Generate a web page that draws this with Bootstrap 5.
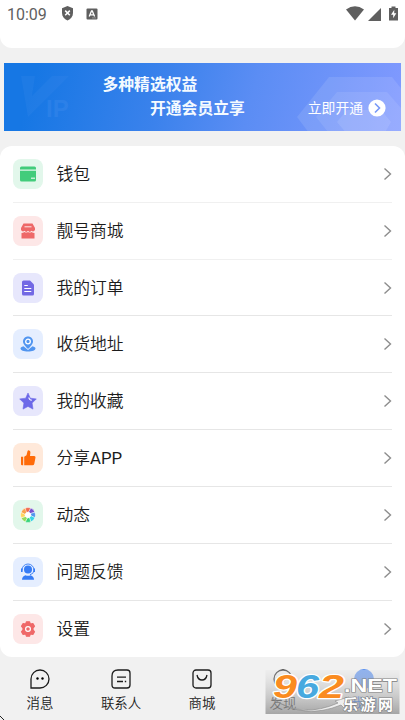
<!DOCTYPE html>
<html lang="zh-CN">
<head>
<meta charset="utf-8">
<meta name="viewport" content="width=device-width, initial-scale=1">
<title>我的</title>
<link href="https://cdn.jsdelivr.net/npm/bootstrap@5.3.0/dist/css/bootstrap.min.css" rel="stylesheet">
<style>
body{width:405px;height:720px;overflow:hidden;background:#f1f1f1;color:#1c1c1c;font-family:Roboto,"Noto Sans CJK SC",sans-serif}
svg{display:block;flex:none}
.top-panel{height:48px;border-radius:0 0 12px 12px}
.status-row{height:27px;color:#5f5f5f;padding:0 7px}
.clock{font-size:16px;line-height:27px;width:54px;padding-top:1px}
.alert-mark{margin-left:12px}
.battery{margin-left:8px}
.vip-banner{height:68px;margin:15px 4px;background:linear-gradient(105deg,#1677e4 8%,#3b82ec 40%,#5b8df4 62%,#829aff 100%)}
.vip-copy{padding:10px 0 0 98.5px;font-size:15.8px;line-height:24px;font-weight:700;color:#f4faff}
.vip-copy .second-line{padding-left:47.5px}
.vip-open{right:15px;bottom:13px;font-size:13.8px;line-height:20px;color:#fff;gap:5px}
.menu-panel{border-radius:12px;padding:0 13px;height:511px}
.menu-row{height:57px;border-bottom:1px solid #e6e6e6;font-size:16.8px;line-height:24px}
.menu-row.short{height:56px}
.menu-row:last-child{border-bottom:0}
.menu-row:first-child,.menu-row:nth-child(2){border-color:#f0f0f0}
.menu-text{font-weight:350}
.tile{width:30px;height:30px;border-radius:8px;margin-right:13.5px;flex:none}
.tile svg{width:18px;height:18px}
.g{background:#e2f7eb}.r{background:#fde7e7}.p{background:#e7e7fc}.b{background:#e5eeff}.o{background:#ffe9da}
.tabs{height:63px;font-size:13.4px;line-height:18px;font-weight:350}
.tab-item{width:81px;padding-top:12px;padding-right:1px;gap:6px}
.watermark{left:265px;top:670px}
.screen-corner{left:0;bottom:0}
</style>
</head>
<body>
<header class="top-panel bg-white">
  <div class="status-row d-flex align-items-center">
    <span class="clock">10:09</span>
    <svg width="13" height="15" viewBox="0 0 13 15"><path d="M6.5 0 12 2.2V7c0 3.4-2.2 6-5.5 7.5C3.200 13 1 10.400 1 7V2.200z" fill="currentColor"/><path d="m4.200 4.600 4.600 4.600m0-4.600L4.200 9.200" stroke="#fff" stroke-width="1.500"/></svg>
    <svg class="alert-mark" width="12" height="12" viewBox="0 0 12 12"><rect x=".5" y=".5" width="11" height="11" rx="1" fill="currentColor"/><path d="M3.200 8.500 5.500 3h.8l2.300 5.500M4.200 6.800h3.500" fill="none" stroke="#fff" stroke-width="1.300"/><path d="M6.500 9.900h1m1 0h1" stroke="#ccc"/></svg>
    <div class="d-flex align-items-center ms-auto">
      <svg width="18" height="15" viewBox="0 0 18 15"><path d="M0 3.500Q9-3 18 3.500L9 14.500z" fill="currentColor"/></svg>
      <svg width="13" height="14" viewBox="0 0 13 14" class="ms-1"><path d="M0 14 13 1v13z" fill="currentColor"/></svg>
      <svg class="battery" width="9" height="15" viewBox="0 0 9 15"><path d="M0 2h2.500V.5h4V2H9v12.500H0z" fill="currentColor"/><path d="M5.300 3.800 2 8.700h2.200v3.500L7.300 7.300H5.200z" fill="#fff"/></svg>
    </div>
  </div>
</header>

<section class="vip-banner position-relative overflow-hidden">
  <svg class="position-absolute top-0 start-0" width="397" height="68" viewBox="0 0 397 68">
    <path d="M17 13h14l-3 20 20-20h17L24 54z" fill="#438bed" opacity=".2"/>
    <text x="42" y="54" font-family="Liberation Sans" font-weight="700" font-size="24" fill="#4790ef" opacity=".3">IP</text>
    <path d="M293 54 325 14h63l32 40-12 20H308z" fill="#fff" opacity=".1"/>
    <path d="M312 54 333 29h50l22 25-12 20H328z" fill="#fff" opacity=".09"/>
    <path d="m333 59 10-12h34l10 12-7 12h-37z" fill="#fff" opacity=".1"/>
  </svg>
  <div class="vip-copy position-relative"><div>多种精选权益</div><div class="second-line">开通会员立享</div></div>
  <div class="vip-open position-absolute d-flex align-items-center"><span>立即开通</span>
    <svg width="18" height="18" viewBox="0 0 18 18"><circle cx="9" cy="9" r="8.600" fill="#fff"/><path d="m7 4.500 4.500 4.500L7 13.500" fill="none" stroke="#7798f7" stroke-width="1.600"/></svg>
  </div>
</section>

<main class="menu-panel bg-white">
  <div class="menu-row d-flex align-items-center"><span class="tile g d-flex align-items-center justify-content-center"><svg viewBox="0 0 18 18" fill="#42cc7b"><path d="M1 4.500V3q0-1.500 1.500-1.500h13Q17 1.500 17 3v1.500zM1 5.700h16V15q0 1.500-1.500 1.500h-13Q1 16.500 1 15z"/><path d="M12 13.200h4" stroke="#e2f7eb" stroke-width="1.200"/></svg></span><span class="menu-text">钱包</span><svg class="ms-auto" width="9" height="14" viewBox="0 0 9 14"><path d="m1.500 1.500 6 5.500-6 5.500" fill="none" stroke="#8d8d8d" stroke-width="1.400"/></svg></div>
  <div class="menu-row d-flex align-items-center"><span class="tile r d-flex align-items-center justify-content-center"><svg viewBox="0 0 18 18" fill="#ee6868"><path d="M4.500 1.500h9l2.500 4.500v2q-1.500 2.500-3.500.8Q10.800 11 9 8.800 7.200 11 5.500 8.800 3.500 10.500 2 8V6zM2.500 11q1.500 0 3-1 1.700 1.200 3.500 0 1.800 1.200 3.500 0 1.500 1 3 1v5.500h-13z"/><path d="M5.500 4.800h7" stroke="#fde7e7"/></svg></span><span class="menu-text">靓号商城</span><svg class="ms-auto" width="9" height="14" viewBox="0 0 9 14"><path d="m1.500 1.500 6 5.500-6 5.500" fill="none" stroke="#8d8d8d" stroke-width="1.400"/></svg></div>
  <div class="menu-row short d-flex align-items-center"><span class="tile p d-flex align-items-center justify-content-center"><svg viewBox="0 0 18 18" fill="#7369e4"><path d="M3 3q0-1.500 1.500-1.500H11L15 5.500V15q0 1.500-1.500 1.500h-9Q3 16.500 3 15z"/><path d="M5.300 6.500h3.500M5.300 9.500h7M5.300 12.500h7" stroke="#fff" stroke-width="1.200"/></svg></span><span class="menu-text">我的订单</span><svg class="ms-auto" width="9" height="14" viewBox="0 0 9 14"><path d="m1.500 1.500 6 5.500-6 5.500" fill="none" stroke="#8d8d8d" stroke-width="1.400"/></svg></div>
  <div class="menu-row d-flex align-items-center"><span class="tile b d-flex align-items-center justify-content-center"><svg viewBox="0 0 18 18" fill="#5195f0"><path d="M4.500 11.200C2.500 11.600 1.500 12.500 1.500 13.400c0 1.700 3.200 3 7.500 3s7.500-1.300 7.500-3c0-.9-1-1.800-3-2.200L9 15z"/><path d="M9 1.500c-3 0-5 2.200-5 4.900C4 9.500 9 13.800 9 13.800s5-4.300 5-7.400c0-2.700-2-4.900-5-4.900z"/><circle cx="9" cy="6.500" r="2.300" fill="none" stroke="#fff" stroke-width="1.300"/></svg></span><span class="menu-text">收货地址</span><svg class="ms-auto" width="9" height="14" viewBox="0 0 9 14"><path d="m1.500 1.500 6 5.500-6 5.500" fill="none" stroke="#8d8d8d" stroke-width="1.400"/></svg></div>
  <div class="menu-row d-flex align-items-center"><span class="tile p d-flex align-items-center justify-content-center"><svg viewBox="0 0 18 18"><path d="m9 1 2.300 5.200 6 .7-4.200 4.200.9 6L9 14.400l-5 2.700.9-6L.7 6.900l6-.7z" fill="#6d69e8" stroke="#6d69e8" stroke-linejoin="round" stroke-width=".6"/><path d="M9.800 5.500Q10.200 8 12.800 8.300" fill="none" stroke="#fff" stroke-width="1.100"/></svg></span><span class="menu-text">我的收藏</span><svg class="ms-auto" width="9" height="14" viewBox="0 0 9 14"><path d="m1.500 1.500 6 5.500-6 5.500" fill="none" stroke="#8d8d8d" stroke-width="1.400"/></svg></div>
  <div class="menu-row d-flex align-items-center"><span class="tile o d-flex align-items-center justify-content-center"><svg viewBox="0 0 18 18" fill="#ff6b09"><path d="M2 7.700h2.200v8.600H3q-1 0-1-1zM5.200 7.700 7.500 6.300l1-4Q9 1 10.200 1.500q1.300.5 1.200 2L11 7h4.200q1.500 0 1.300 1.500l-1.200 6.300q-.3 1.500-1.800 1.500H5.200z"/></svg></span><span class="menu-text">分享<span class="fw-normal">APP</span></span><svg class="ms-auto" width="9" height="14" viewBox="0 0 9 14"><path d="m1.500 1.500 6 5.500-6 5.500" fill="none" stroke="#8d8d8d" stroke-width="1.400"/></svg></div>
  <div class="menu-row d-flex align-items-center"><span class="tile g d-flex align-items-center justify-content-center"><svg viewBox="-9.500 -9.500 19 19" stroke="#fff" stroke-width=".5"><path d="M-3-7.300Q0-8.500 3-7.300L.5-2.800-3-3z" fill="#f06a50"/><path d="M3-7.300Q6-6.200 7.300-3L2.700-1.500.5-2.800z" fill="#7850cf"/><path d="M7.300-3Q8.500 0 7.300 3L2.800.5l-.1-2z" fill="#5295ed"/><path d="M7.300 3Q6.200 6 3 7.300L1.500 2.700 2.800.5z" fill="#38d4e5"/><path d="M3 7.300Q0 8.500-3 7.300L-.5 2.800l2-.1z" fill="#35d47b"/><path d="M-3 7.300Q-6 6.200-7.300 3L-2.700 1.500-.5 2.800z" fill="#98db5c"/><path d="M-7.300 3Q-8.500 0-7.300-3L-2.800-.5l.1 2z" fill="#ffd45c"/><path d="M-7.300-3Q-6.200-6-3-7.300l1.500 4.600L-2.800-.5z" fill="#f9a34d"/><circle r="2.900" fill="#fff"/></svg></span><span class="menu-text">动态</span><svg class="ms-auto" width="9" height="14" viewBox="0 0 9 14"><path d="m1.500 1.500 6 5.500-6 5.500" fill="none" stroke="#8d8d8d" stroke-width="1.400"/></svg></div>
  <div class="menu-row d-flex align-items-center"><span class="tile b d-flex align-items-center justify-content-center"><svg viewBox="0 0 18 18" fill="#367cf5"><circle cx="9" cy="6.600" r="4"/><path d="M3 7.500V7a6 6 0 0 1 12 0v.5q-.5 3.700-4 4.200" fill="none" stroke="#367cf5" stroke-width=".9"/><path d="M2 5.500h1.600v3.500H2zM14.400 5.500H16v3.500h-1.600zM3 16.700q0-3.500 3.500-4.500Q9 13.500 11.500 12.200 15 13.200 15 16.700z"/></svg></span><span class="menu-text">问题反馈</span><svg class="ms-auto" width="9" height="14" viewBox="0 0 9 14"><path d="m1.500 1.500 6 5.500-6 5.500" fill="none" stroke="#8d8d8d" stroke-width="1.400"/></svg></div>
  <div class="menu-row short d-flex align-items-center"><span class="tile r d-flex align-items-center justify-content-center"><svg viewBox="0 0 18 18"><path d="M7.500 1.800h3l.8 2.200 2.600-.4 1.600 2.600L14 8v2l1.500 1.800-1.600 2.600-2.600-.4-.8 2.200h-3L6.700 14l-2.600.4-1.600-2.600L4 10V8L2.500 6.200l1.600-2.600 2.600.4z" fill="#ef6868" stroke="#ef6868" stroke-linejoin="round" stroke-width="1.200"/><circle cx="9" cy="9" r="2.400" fill="none" stroke="#fff" stroke-width="1.200"/></svg></span><span class="menu-text">设置</span><svg class="ms-auto" width="9" height="14" viewBox="0 0 9 14"><path d="m1.500 1.500 6 5.500-6 5.500" fill="none" stroke="#8d8d8d" stroke-width="1.400"/></svg></div>
</main>

<nav class="tabs d-flex text-center">
  <div class="tab-item d-flex flex-column align-items-center"><svg width="20" height="20" viewBox="0 0 20 20"><path d="M1 19V10a9 9 0 1 1 9 9z" fill="none" stroke="#1c1c1c" stroke-width="1.300"/><circle cx="7.500" cy="9.500" r="1.200"/><circle cx="12.500" cy="9.500" r="1.200"/></svg><span>消息</span></div>
  <div class="tab-item d-flex flex-column align-items-center"><svg width="20" height="20" viewBox="0 0 20 20" fill="none" stroke="#1c1c1c" stroke-width="1.300"><path d="M7 1h9q3 0 3 3v12q0 3-3 3H4q-3 0-3-3V7q0-6 6-6z"/><path d="M6 8.200h9M6 12.500h6m1.800 0h1.400"/></svg><span>联系人</span></div>
  <div class="tab-item d-flex flex-column align-items-center"><svg width="20" height="20" viewBox="0 0 20 20" fill="none" stroke="#1c1c1c" stroke-width="1.300"><rect x="1" y="1" width="18" height="18" rx="3"/><path d="M5 6q1 5 5 5t5-5"/></svg><span>商城</span></div>
  <div class="tab-item d-flex flex-column align-items-center"><svg width="20" height="20" viewBox="0 0 20 20" fill="none" stroke="#1c1c1c" stroke-width="1.300"><circle cx="10" cy="10" r="9"/><path d="m14 6-2.500 5.500L6 14l2.500-5.500z"/></svg><span>发现</span></div>
  <div class="tab-item d-flex flex-column align-items-center"><svg width="20" height="20" viewBox="0 0 20 20"><circle cx="10" cy="10" r="10" fill="#568ef0"/></svg><span class="text-primary">我的</span></div>
</nav>

<svg class="watermark position-absolute" width="135" height="45" viewBox="0 0 135 45">
  <defs><linearGradient id="shade" x1="0" y1="0" x2="0" y2="1"><stop stop-color="#e8e8e8" stop-opacity=".4"/><stop offset="1" stop-color="#8c8c8c" stop-opacity=".75"/></linearGradient></defs>
  <rect x=".5" width="134" height="44" fill="url(#shade)"/>
  <path d="M8 29Q37 49 73 33l-3-2 14-4-5 11-3-3Q39 50 8 29z" fill="#eee" stroke="#888" stroke-width=".6"/>
  <g font-family="Liberation Sans" font-weight="700" font-style="italic" font-size="34" stroke="#fff" stroke-width="2.500" paint-order="stroke" stroke-linejoin="round">
    <text x="8" y="28" textLength="24" lengthAdjust="spacingAndGlyphs" fill="#fa8b20">9</text>
    <text x="31" y="28" textLength="23" lengthAdjust="spacingAndGlyphs" fill="#48a9df">6</text>
    <text x="54" y="28" textLength="25" lengthAdjust="spacingAndGlyphs" fill="#fa8b20">2</text>
  </g>
  <g fill="#fff" stroke="#808080" stroke-width="1.200" paint-order="stroke" font-weight="700">
    <text x="79" y="22" font-family="Liberation Sans" font-size="18.500" textLength="53" lengthAdjust="spacingAndGlyphs">.NET</text>
    <text x="78" y="40" font-family="Noto Sans CJK SC, sans-serif" font-size="15" textLength="50">乐游网</text>
  </g>
</svg>
<svg class="screen-corner position-absolute" width="4" height="4" viewBox="0 0 4 4"><path d="M0 0 4 4" stroke="#222" fill="none"/></svg>
<script src="https://cdn.jsdelivr.net/npm/bootstrap@5.3.0/dist/js/bootstrap.bundle.min.js"></script>
</body>
</html>
